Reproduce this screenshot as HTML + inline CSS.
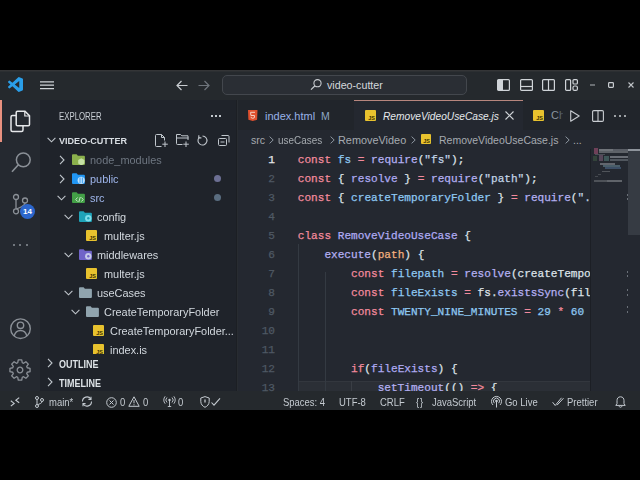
<!DOCTYPE html>
<html><head><meta charset="utf-8">
<style>
*{margin:0;padding:0;box-sizing:border-box}
html,body{width:640px;height:480px;background:#000;overflow:hidden}
body{position:relative;font-family:"Liberation Sans",sans-serif}
.a{position:absolute}
.t{position:absolute;white-space:nowrap;font-family:"Liberation Sans",sans-serif}
.m{position:absolute;white-space:pre;font-family:"Liberation Mono",monospace;font-size:11.1px;line-height:19px;-webkit-text-stroke:0.25px currentColor}
svg{position:absolute;overflow:visible}
#title{left:0;top:70px;width:640px;height:30px;background:#25292d}
#act{left:0;top:100px;width:40px;height:291px;background:#252930}
#side{left:40px;top:100px;width:196px;height:291px;background:#1f232a}
#sideb{left:236px;top:100px;width:1px;height:291px;background:#1c1f24}
#ed{left:238px;top:100px;width:402px;height:291px;background:#242830}
#status{left:0;top:391px;width:640px;height:19px;background:#25292d}
.tree{font-size:11.5px;line-height:19px;height:19px;color:#d2d8de;transform:scaleX(0.95);transform-origin:0 0}
.ln{color:#636e7b;text-align:right;width:30px;left:245px}
.k{color:#f28a9c}.b{color:#8ec8f2}.f{color:#b4b0f2}.w{color:#dde2e8}.s{color:#c2d4e6}.o{color:#f2b07e}.p{color:#aeaaf2}
.st{font-size:10.9px;line-height:18px;color:#c4cad0;top:393px;transform:scaleX(0.87);transform-origin:0 0}
.bc{font-size:10.5px;line-height:19px;color:#a6abb0;top:131px}
.ig{position:absolute;width:1px;background:#343a42}
.js{width:11px;height:11px;background:#e8c22e;border-radius:1px}
.js i{position:absolute;right:1px;bottom:0px;font-style:normal;font-weight:bold;font-family:"Liberation Sans",sans-serif;font-size:5.5px;line-height:6px;color:#3a3000}
</style></head><body>
<div class="a" id="title"></div>
<div class="a" style="left:0;top:70px;width:640px;height:1px;background:#343537"></div><div class="a" style="left:0;top:71px;width:640px;height:1px;background:#2c2f32"></div>
<div class="a" id="act"></div>
<div class="a" id="side"></div>
<div class="a" id="sideb"></div><div class="a" style="left:237px;top:100px;width:2px;height:291px;background:#282c31"></div>
<div class="a" id="ed"></div>
<div class="a" id="status"></div>

<!-- TITLE BAR -->
<svg style="left:8px;top:77px" width="15" height="15" viewBox="0 0 100 100"><path fill="#2a9ee8" d="M96.46 10.8 75.86.87a6.23 6.23 0 0 0-7.1 1.2L29.33 38.05 12.15 25a4.16 4.16 0 0 0-5.32.24L1.36 30.2a4.17 4.17 0 0 0 0 6.16L16.26 50 1.36 63.64a4.17 4.17 0 0 0 0 6.16l5.47 4.97a4.16 4.16 0 0 0 5.32.24l17.18-13.05L68.76 97.930a6.22 6.22 0 0 0 7.1 1.2l20.6-9.92a6.25 6.25 0 0 0 3.54-5.630V16.42a6.25 6.25 0 0 0-3.54-5.62zM75 72.7 45.11 50 75 27.3z"/></svg>
<svg style="left:40px;top:80px" width="14" height="10" viewBox="0 0 14 10"><path d="M0 1.8h14M0 5.2h14M0 8.7h14" stroke="#d0d4d8" stroke-width="1.2"/></svg>
<svg style="left:176px;top:80px" width="12" height="11" viewBox="0 0 12 11"><path d="M11.5 5.5H1M5.5 1 1 5.5 5.5 10" stroke="#c8ccd0" stroke-width="1.2" fill="none"/></svg>
<svg style="left:198px;top:80px" width="12" height="11" viewBox="0 0 12 11"><path d="M0.5 5.5H11M6.5 1 11 5.5 6.5 10" stroke="#6f757c" stroke-width="1.2" fill="none"/></svg>
<div class="a" style="left:222px;top:75px;width:245px;height:20px;border-radius:5px;background:#2a2e34;border:1px solid #43474d"></div>
<svg style="left:310px;top:79px" width="12" height="11" viewBox="0 0 12 11"><circle cx="7.5" cy="4.2" r="3.6" stroke="#c8ccd0" stroke-width="1.1" fill="none"/><path d="M5 6.8 1 10.6" stroke="#c8ccd0" stroke-width="1.2"/></svg>
<div class="t" style="left:327px;top:75px;font-size:10.7px;line-height:20px;color:#d4d8dc">video-cutter</div>
<!-- layout icons -->
<svg style="left:497px;top:79px" width="13" height="12" viewBox="0 0 13 12"><rect x="0.6" y="0.6" width="11.8" height="10.8" rx="1" stroke="#d0d4d8" stroke-width="1.2" fill="none"/><rect x="1" y="1" width="5" height="10" fill="#d0d4d8"/></svg>
<svg style="left:520px;top:79px" width="13" height="12" viewBox="0 0 13 12"><rect x="0.6" y="0.6" width="11.8" height="10.8" rx="1" stroke="#d0d4d8" stroke-width="1.2" fill="none"/><path d="M1 7.5h11" stroke="#d0d4d8" stroke-width="1.2"/></svg>
<svg style="left:542px;top:79px" width="13" height="12" viewBox="0 0 13 12"><rect x="0.6" y="0.6" width="11.8" height="10.8" rx="1" stroke="#d0d4d8" stroke-width="1.2" fill="none"/><path d="M6.5 1v10" stroke="#d0d4d8" stroke-width="1.2"/></svg>
<svg style="left:565px;top:79px" width="13" height="12" viewBox="0 0 13 12"><rect x="0.6" y="0.6" width="5" height="10.8" rx="1" stroke="#d0d4d8" stroke-width="1.2" fill="none"/><rect x="8" y="0.6" width="4.4" height="4.4" rx="1" stroke="#d0d4d8" stroke-width="1.2" fill="none"/><rect x="8" y="7" width="4.4" height="4.4" rx="1.5" stroke="#d0d4d8" stroke-width="1.2" fill="none"/></svg>
<svg style="left:590px;top:84px" width="6" height="2" viewBox="0 0 6 2"><path d="M0 1h5" stroke="#b0b4b8" stroke-width="1"/></svg>
<svg style="left:608px;top:82px" width="6" height="6" viewBox="0 0 6 6"><rect x="0.6" y="0.6" width="4.8" height="4.8" rx="0.8" stroke="#c8ccd0" stroke-width="1.2" fill="none"/></svg>
<svg style="left:628px;top:82px" width="6" height="6" viewBox="0 0 6 6"><path d="M0.5 0.5 5.5 5.5M5.5 0.5 0.5 5.5" stroke="#c0c4c8" stroke-width="1.1"/></svg>

<!-- ACTIVITY BAR -->
<div class="a" style="left:0;top:100px;width:2px;height:42px;background:#e8907f"></div>
<svg style="left:10px;top:110px" width="21" height="23" viewBox="0 0 21 23"><path d="M6 5.5H2.5a1.5 1.5 0 0 0-1.5 1.5v13a1.5 1.5 0 0 0 1.5 1.5h9a1.5 1.5 0 0 0 1.5-1.5V16" stroke="#e6e8ea" stroke-width="1.5" fill="none"/><path d="M7.5 1.2h7.5l4.5 4.5V14.5a1.3 1.3 0 0 1-1.3 1.3H7.5a1.3 1.3 0 0 1-1.3-1.3V2.5a1.3 1.3 0 0 1 1.3-1.3z" stroke="#e6e8ea" stroke-width="1.5" fill="none"/><path d="M14.8 1.5v4.5h4.5" stroke="#e6e8ea" stroke-width="1.2" fill="none"/></svg>
<svg style="left:11px;top:152px" width="21" height="21" viewBox="0 0 21 21"><circle cx="12.3" cy="7.8" r="6.9" stroke="#8b9097" stroke-width="1.5" fill="none"/><path d="M7.4 12.7 1 19.8" stroke="#8b9097" stroke-width="1.6"/></svg>
<svg style="left:11px;top:192px" width="18" height="22" viewBox="0 0 18 22"><circle cx="5" cy="5" r="2.5" stroke="#8b9097" stroke-width="1.3" fill="none"/><circle cx="14" cy="8.5" r="2.5" stroke="#8b9097" stroke-width="1.3" fill="none"/><circle cx="5" cy="19.3" r="2.5" stroke="#8b9097" stroke-width="1.3" fill="none"/><path d="M5 7.5v9.3M14 11c0 3-4 4-8.5 6" stroke="#8b9097" stroke-width="1.3" fill="none"/></svg>
<div class="a" style="left:20px;top:204px;width:15px;height:15px;border-radius:50%;background:#2c66cc"></div>
<div class="t" style="left:20px;top:204px;width:15px;text-align:center;font-size:8px;line-height:15px;font-weight:bold;color:#fff">14</div>
<div class="a" style="left:13px;top:244px;width:2px;height:2px;background:#8b9097;border-radius:1px"></div>
<div class="a" style="left:19px;top:244px;width:2px;height:2px;background:#8b9097;border-radius:1px"></div>
<div class="a" style="left:26px;top:244px;width:2px;height:2px;background:#8b9097;border-radius:1px"></div>
<svg style="left:10px;top:318px" width="22" height="22" viewBox="0 0 22 22"><circle cx="10.5" cy="10.7" r="9.8" stroke="#8b9097" stroke-width="1.4" fill="none"/><circle cx="10.5" cy="7.3" r="3.2" stroke="#8b9097" stroke-width="1.4" fill="none"/><path d="M4.2 18c0.8-3.5 3.3-5.5 6.3-5.5s5.5 2 6.3 5.5" stroke="#8b9097" stroke-width="1.4" fill="none"/></svg>
<svg style="left:9px;top:359px" width="22" height="22" viewBox="-11 -11 22 22"><path d="M7.26 -2.25 L10.05 -1.73 L10.05 1.73 L7.26 2.25 L6.72 3.55 L8.33 5.89 L5.89 8.33 L3.55 6.72 L2.25 7.26 L1.73 10.05 L-1.73 10.05 L-2.25 7.26 L-3.55 6.72 L-5.89 8.33 L-8.33 5.89 L-6.72 3.55 L-7.26 2.25 L-10.05 1.73 L-10.05 -1.73 L-7.26 -2.25 L-6.72 -3.55 L-8.33 -5.89 L-5.89 -8.33 L-3.55 -6.72 L-2.25 -7.26 L-1.73 -10.05 L1.73 -10.05 L2.25 -7.26 L3.55 -6.72 L5.89 -8.33 L8.33 -5.89 L6.72 -3.55Z" stroke="#8b9097" stroke-width="1.3" fill="none" stroke-linejoin="round"/><circle cx="0" cy="0" r="2.8" stroke="#8b9097" stroke-width="1.3" fill="none"/></svg>

<!-- SIDEBAR -->
<svg width="0" height="0" style="position:absolute"><defs>
<path id="fold" d="M0 1.3a1 1 0 0 1 1-1h3.6l1.3 1.4h6a1 1 0 0 1 1 1v7.3a1 1 0 0 1-1 1H1a1 1 0 0 1-1-1z"/>
<symbol id="f-node" viewBox="0 0 13 11"><use href="#fold" fill="#8bb04c"/><path d="M9.3 4.2l3.1 1.8v3.6l-3.1 1.8-3.1-1.8V6z" fill="#c5e1a5"/></symbol>
<symbol id="f-public" viewBox="0 0 13 11"><use href="#fold" fill="#2196f3"/><circle cx="9.2" cy="7.3" r="3.6" fill="#bbdefb"/><path d="M8 4.5v5.6M10.4 4.5v5.6" stroke="#2196f3" stroke-width="0.8"/></symbol>
<symbol id="f-src" viewBox="0 0 13 11"><use href="#fold" fill="#43a047"/><path d="M5.5 5.5 3.8 7.5l1.7 2M9.5 5.5l1.7 2-1.7 2M8.3 5 6.8 10" stroke="#c8e6c9" stroke-width="1" fill="none"/></symbol>
<symbol id="f-config" viewBox="0 0 13 11"><use href="#fold" fill="#1fa3b8"/><circle cx="9.3" cy="7.2" r="3.2" fill="#80deea"/><circle cx="9.3" cy="7.2" r="1.2" fill="#1fa3b8"/></symbol>
<symbol id="f-mw" viewBox="0 0 13 11"><use href="#fold" fill="#7064c8"/><circle cx="9.3" cy="7.2" r="3.2" fill="#c5cae9"/><circle cx="9.3" cy="7.2" r="1.2" fill="#7064c8"/></symbol>
<symbol id="f-gray" viewBox="0 0 13 11"><use href="#fold" fill="#90a4ae"/></symbol>
</defs></svg>
<svg style="left:47px;top:137px" width="9" height="6" viewBox="0 0 9 6"><path d="M0.6 0.8 4.5 4.8 8.4 0.8" stroke="#c0c6cc" stroke-width="1.1" fill="none"/></svg>
<div class="t" style="left:59px;top:131px;font-size:9.8px;line-height:19px;font-weight:bold;color:#d8dde2;transform:scaleX(0.925);transform-origin:0 0">VIDEO-CUTTER</div>
<svg style="left:155px;top:134px" width="14" height="13" viewBox="0 0 14 13"><path d="M6.5 12.5H1.5a1 1 0 0 1-1-1v-10a1 1 0 0 1 1-1h5l3 3v3" stroke="#c0c6cc" stroke-width="1" fill="none"/><path d="M6.5 0.5v3h3M10 7.5v5.5M7.3 10.2h5.5" stroke="#c0c6cc" stroke-width="1" fill="none"/></svg>
<svg style="left:176px;top:134px" width="14" height="13" viewBox="0 0 14 13"><path d="M6.5 10.5h-5a1 1 0 0 1-1-1v-9h4l1.3 1.3h6.2v4.2" stroke="#c0c6cc" stroke-width="1" fill="none"/><path d="M0.5 4h12M10 7.5v5.5M7.3 10.2h5.5" stroke="#c0c6cc" stroke-width="1" fill="none"/></svg>
<svg style="left:197px;top:135px" width="11" height="11" viewBox="0 0 11 11"><path d="M5.5 1A4.5 4.5 0 1 1 2.3 2.3" stroke="#c0c6cc" stroke-width="1.1" fill="none"/><path d="M1.8 0.3v2.6h2.6" stroke="#c0c6cc" stroke-width="1.1" fill="none"/></svg>
<svg style="left:218px;top:135px" width="12" height="11" viewBox="0 0 12 11"><rect x="0.5" y="3.5" width="8" height="7" rx="1" stroke="#c0c6cc" stroke-width="1" fill="none"/><path d="M3.5 0.5h6.5a1 1 0 0 1 1 1v6M2.5 7h4" stroke="#c0c6cc" stroke-width="1" fill="none"/></svg>
<div class="a" style="left:214px;top:175px;width:7px;height:7px;border-radius:50%;background:#6c6f93"></div>
<div class="a" style="left:214px;top:194px;width:7px;height:7px;border-radius:50%;background:#5a6d80"></div>
<div class="a" style="left:0;top:0;width:238px;height:354px;overflow:hidden">
<svg style="left:59px;top:155px" width="6" height="10" viewBox="0 0 6 10"><path d="M1 0.8 5 5 1 9.2" stroke="#c0c6cc" stroke-width="1.1" fill="none"/></svg>
<svg style="left:72px;top:154px" width="13" height="11" viewBox="0 0 13 11"><use href="#f-node"/></svg>
<div class="t tree" style="left:90px;top:151px;color:#6e7681">node_modules</div>
<svg style="left:59px;top:174px" width="6" height="10" viewBox="0 0 6 10"><path d="M1 0.8 5 5 1 9.2" stroke="#c0c6cc" stroke-width="1.1" fill="none"/></svg>
<svg style="left:72px;top:173px" width="13" height="11" viewBox="0 0 13 11"><use href="#f-public"/></svg>
<div class="t tree" style="left:90px;top:170px;color:#9fb6ec">public</div>
<svg style="left:57px;top:195px" width="9" height="6" viewBox="0 0 9 6"><path d="M0.6 0.8 4.5 4.8 8.4 0.8" stroke="#c0c6cc" stroke-width="1.1" fill="none"/></svg>
<svg style="left:72px;top:192px" width="13" height="11" viewBox="0 0 13 11"><use href="#f-src"/></svg>
<div class="t tree" style="left:90px;top:189px;color:#9fb6ec">src</div>
<svg style="left:64px;top:214px" width="9" height="6" viewBox="0 0 9 6"><path d="M0.6 0.8 4.5 4.8 8.4 0.8" stroke="#c0c6cc" stroke-width="1.1" fill="none"/></svg>
<svg style="left:79px;top:211px" width="13" height="11" viewBox="0 0 13 11"><use href="#f-config"/></svg>
<div class="t tree" style="left:97px;top:208px;color:#d2d8de">config</div>
<div class="a js" style="left:86px;top:230px"><i>JS</i></div>
<div class="t tree" style="left:104px;top:227px;color:#d2d8de">multer.js</div>
<svg style="left:64px;top:252px" width="9" height="6" viewBox="0 0 9 6"><path d="M0.6 0.8 4.5 4.8 8.4 0.8" stroke="#c0c6cc" stroke-width="1.1" fill="none"/></svg>
<svg style="left:79px;top:249px" width="13" height="11" viewBox="0 0 13 11"><use href="#f-mw"/></svg>
<div class="t tree" style="left:97px;top:246px;color:#d2d8de">middlewares</div>
<div class="a js" style="left:86px;top:268px"><i>JS</i></div>
<div class="t tree" style="left:104px;top:265px;color:#d2d8de">multer.js</div>
<svg style="left:64px;top:290px" width="9" height="6" viewBox="0 0 9 6"><path d="M0.6 0.8 4.5 4.8 8.4 0.8" stroke="#c0c6cc" stroke-width="1.1" fill="none"/></svg>
<svg style="left:79px;top:287px" width="13" height="11" viewBox="0 0 13 11"><use href="#f-gray"/></svg>
<div class="t tree" style="left:97px;top:284px;color:#d2d8de">useCases</div>
<svg style="left:71px;top:309px" width="9" height="6" viewBox="0 0 9 6"><path d="M0.6 0.8 4.5 4.8 8.4 0.8" stroke="#c0c6cc" stroke-width="1.1" fill="none"/></svg>
<svg style="left:86px;top:306px" width="13" height="11" viewBox="0 0 13 11"><use href="#f-gray"/></svg>
<div class="t tree" style="left:104px;top:303px;color:#d2d8de">CreateTemporaryFolder</div>
<div class="a js" style="left:93px;top:325px"><i>JS</i></div>
<div class="t tree" style="left:110px;top:322px;color:#d2d8de">CreateTemporaryFolder...</div>
<div class="a js" style="left:93px;top:344px"><i>JS</i></div>
<div class="t tree" style="left:110px;top:341px;color:#d2d8de">index.js</div>
</div>
<svg style="left:47px;top:358px" width="6" height="10" viewBox="0 0 6 10"><path d="M1 0.8 5 5 1 9.2" stroke="#c0c6cc" stroke-width="1.1" fill="none"/></svg>
<div class="t" style="left:59px;top:355px;font-size:10px;line-height:19px;font-weight:bold;color:#dde2e6;transform:scaleX(0.9);transform-origin:0 0">OUTLINE</div>
<svg style="left:47px;top:377px" width="6" height="10" viewBox="0 0 6 10"><path d="M1 0.8 5 5 1 9.2" stroke="#c0c6cc" stroke-width="1.1" fill="none"/></svg>
<div class="t" style="left:59px;top:374px;font-size:10px;line-height:19px;font-weight:bold;color:#dde2e6;transform:scaleX(0.9);transform-origin:0 0">TIMELINE</div>

<div class="t" style="left:59px;top:107px;font-size:10.3px;line-height:19px;color:#c8ced4;transform:scaleX(0.76);transform-origin:0 0">EXPLORER</div>
<div class="a" style="left:211px;top:115px;width:2px;height:2px;background:#c2c8ce"></div><div class="a" style="left:215px;top:115px;width:2px;height:2px;background:#c2c8ce"></div><div class="a" style="left:219px;top:115px;width:2px;height:2px;background:#c2c8ce"></div>

<!-- EDITOR -->
<div class="a" style="left:238px;top:100px;width:116px;height:30px;background:#21252b"></div>
<div class="a" style="left:523px;top:100px;width:117px;height:30px;background:#21252b"></div>
<div class="a" style="left:354px;top:100px;width:169px;height:1px;background:#b8867e"></div>
<svg style="left:248px;top:110px" width="10" height="11" viewBox="0 0 10 11"><path d="M0 0h9.5l-0.4 9.8L4.75 11 0.4 9.8z" fill="#e0502e"/><path d="M7 2.3H2.6l0.3 3.2h3.6l-0.2 2.3-1.55 0.5-1.5-0.5-0.1-1" stroke="#f6d0c4" stroke-width="1" fill="none"/></svg>
<div class="t" style="left:265px;top:107px;font-size:11px;line-height:19px;color:#98b2e6">index.html</div>
<div class="t" style="left:321px;top:107px;font-size:10.5px;line-height:19px;color:#8ea8c4">M</div>
<div class="a js" style="left:365px;top:110px"><i>JS</i></div>
<div class="t" style="left:383px;top:107px;font-size:10.2px;line-height:19px;font-style:italic;color:#e6e9ec">RemoveVideoUseCase.js</div>
<svg style="left:505px;top:111px" width="9" height="9" viewBox="0 0 9 9"><path d="M0.5 0.5 8.5 8.5M8.5 0.5 0.5 8.5" stroke="#d0d4d8" stroke-width="1.1"/></svg>
<div class="a" style="left:533px;top:110px;width:11px;height:11px;overflow:hidden"><div class="a js" style="left:0;top:0"><i>JS</i></div></div>
<div class="a" style="left:551px;top:100px;width:12px;height:30px;overflow:hidden"><div class="t" style="left:0;top:6px;font-size:11px;line-height:19px;color:#8d96a0">Ch</div></div>
<div class="a" style="left:556px;top:100px;width:10px;height:30px;background:linear-gradient(90deg,rgba(33,37,43,0),#21252b)"></div>
<svg style="left:570px;top:110px" width="10" height="12" viewBox="0 0 10 12"><path d="M0.7 0.8 9.2 6 0.7 11.2z" stroke="#c8ccd0" stroke-width="1.1" fill="none" stroke-linejoin="round"/></svg>
<svg style="left:592px;top:110px" width="12" height="12" viewBox="0 0 12 12"><rect x="0.6" y="0.6" width="10.8" height="10.8" rx="1.2" stroke="#c8ccd0" stroke-width="1.1" fill="none"/><path d="M6 1v10" stroke="#c8ccd0" stroke-width="1.1"/></svg>
<div class="a" style="left:614px;top:115px;width:2px;height:2px;border-radius:1px;background:#c8ccd0"></div>
<div class="a" style="left:619px;top:115px;width:2px;height:2px;border-radius:1px;background:#c8ccd0"></div>
<div class="a" style="left:624px;top:115px;width:2px;height:2px;border-radius:1px;background:#c8ccd0"></div>
<div class="t bc" style="left:251px">src</div>
<div class="t bc" style="left:278px;transform:scaleX(0.945);transform-origin:0 0">useCases</div>
<div class="t bc" style="left:338px;font-size:10.9px">RemoveVideo</div>
<div class="t bc" style="left:439px">RemoveVideoUseCase.js</div>
<svg style="left:269px;top:136px" width="5" height="8" viewBox="0 0 5 8"><path d="M0.6 0.6 4.2 4 0.6 7.4" stroke="#8d96a0" stroke-width="1" fill="none"/></svg>
<svg style="left:330px;top:136px" width="5" height="8" viewBox="0 0 5 8"><path d="M0.6 0.6 4.2 4 0.6 7.4" stroke="#8d96a0" stroke-width="1" fill="none"/></svg>
<svg style="left:411px;top:136px" width="5" height="8" viewBox="0 0 5 8"><path d="M0.6 0.6 4.2 4 0.6 7.4" stroke="#8d96a0" stroke-width="1" fill="none"/></svg>
<svg style="left:565px;top:136px" width="5" height="8" viewBox="0 0 5 8"><path d="M0.6 0.6 4.2 4 0.6 7.4" stroke="#8d96a0" stroke-width="1" fill="none"/></svg>
<div class="a js" style="left:421px;top:134px;width:10px;height:10px"><i>JS</i></div>
<div class="t bc" style="left:573px">...</div>
<div class="m ln" style="top:151px;color:#e6e9ec">1</div>
<div class="m ln" style="top:170px;color:#4f5964">2</div>
<div class="m ln" style="top:189px;color:#4f5964">3</div>
<div class="m ln" style="top:208px;color:#4f5964">4</div>
<div class="m ln" style="top:227px;color:#4f5964">5</div>
<div class="m ln" style="top:246px;color:#4f5964">6</div>
<div class="m ln" style="top:265px;color:#4f5964">7</div>
<div class="m ln" style="top:284px;color:#4f5964">8</div>
<div class="m ln" style="top:303px;color:#4f5964">9</div>
<div class="m ln" style="top:322px;color:#4f5964">10</div>
<div class="m ln" style="top:341px;color:#4f5964">11</div>
<div class="m ln" style="top:360px;color:#4f5964">12</div>
<div class="m ln" style="top:379px;color:#4f5964">13</div>
<div class="a" style="left:298px;top:381px;width:292px;height:10px;background:#2b2f36;border-top:1px solid #33373e"></div>
<div class="ig" style="left:298px;top:244px;height:147px"></div>
<div class="ig" style="left:325px;top:272px;height:119px"></div>
<div class="ig" style="left:351px;top:381px;height:10px;background:#3a3e45"></div>
<div class="a" style="left:238px;top:151px;width:352px;height:240px;overflow:hidden"><div class="m" style="left:59.75px;top:0px"><span class="k">const</span> <span class="b">fs</span> <span class="k">=</span> <span class="f">require</span><span class="w">(</span><span class="s">"fs"</span><span class="w">);</span></div><div class="m" style="left:59.75px;top:19px"><span class="k">const</span> <span class="w">{</span> <span class="p">resolve</span> <span class="w">}</span> <span class="k">=</span> <span class="f">require</span><span class="w">(</span><span class="s">"path"</span><span class="w">);</span></div><div class="m" style="left:59.75px;top:38px"><span class="k">const</span> <span class="w">{</span> <span class="b">createTemporaryFolder</span> <span class="w">}</span> <span class="k">=</span> <span class="f">require</span><span class="w">(</span><span class="s">"./utils/CreateTemporaryFolder"</span><span class="w">);</span></div><div class="m" style="left:59.75px;top:57px"></div><div class="m" style="left:59.75px;top:76px"><span class="k">class</span> <span class="p">RemoveVideoUseCase</span> <span class="w">{</span></div><div class="m" style="left:59.75px;top:95px">    <span class="f">execute</span><span class="w">(</span><span class="o">path</span><span class="w">) {</span></div><div class="m" style="left:59.75px;top:114px">        <span class="k">const</span> <span class="b">filepath</span> <span class="k">=</span> <span class="f">resolve</span><span class="w">(createTemporaryFolder(), path);</span></div><div class="m" style="left:59.75px;top:133px">        <span class="k">const</span> <span class="b">fileExists</span> <span class="k">=</span> <span class="w">fs.</span><span class="f">existsSync</span><span class="w">(filepath);</span></div><div class="m" style="left:59.75px;top:152px">        <span class="k">const</span> <span class="b">TWENTY_NINE_MINUTES</span> <span class="k">=</span> <span class="b">29</span> <span class="k">*</span> <span class="b">60</span></div><div class="m" style="left:59.75px;top:171px"></div><div class="m" style="left:59.75px;top:190px"></div><div class="m" style="left:59.75px;top:209px">        <span class="k">if</span><span class="w">(</span><span class="p">fileExists</span><span class="w">) {</span></div><div class="m" style="left:59.75px;top:228px">            <span class="f">setTimeout</span><span class="w">(() </span><span class="k">=&gt;</span> <span class="w">{</span></div></div>
<div class="a" style="left:590px;top:149px;width:1px;height:242px;background:#1c1f25"></div>
<div class="a" style="left:628px;top:149px;width:12px;height:86px;background:#363b43"></div>
<div class="a" style="left:627px;top:194px;width:1px;height:2px;background:#6a7078"></div>
<div class="a" style="left:627px;top:198px;width:1px;height:2px;background:#6a7078"></div>
<div class="a" style="left:627px;top:271px;width:1px;height:2px;background:#6a7078"></div>
<div class="a" style="left:627px;top:275px;width:1px;height:2px;background:#6a7078"></div>
<div class="a" style="left:627px;top:289px;width:1px;height:2px;background:#6a7078"></div>
<div class="a" style="left:627px;top:294px;width:1px;height:2px;background:#6a7078"></div>
<div class="a" style="left:627px;top:306px;width:1px;height:2px;background:#6a7078"></div>
<div class="a" style="left:627px;top:311px;width:1px;height:2px;background:#6a7078"></div>
<div class="a" style="left:628px;top:149px;width:12px;height:2px;background:#8e949c"></div>
<div class="a" style="left:0;top:0;width:640px;height:480px;filter:blur(0.35px)"><div class="a" style="left:594px;top:148px;width:4px;height:6px;background:#6e4058"></div><div class="a" style="left:599px;top:149px;width:16px;height:2px;background:#70747a"></div><div class="a" style="left:599px;top:151px;width:29px;height:2px;background:#5e6268"></div><div class="a" style="left:613px;top:149px;width:15px;height:2px;background:#5a5e66"></div><div class="a" style="left:595px;top:154px;width:10px;height:1px;background:#4a4e56"></div><div class="a" style="left:593px;top:156px;width:4px;height:5px;background:#33433a"></div><div class="a" style="left:599px;top:155px;width:4px;height:6px;background:#56475a"></div><div class="a" style="left:604px;top:156px;width:5px;height:5px;background:#3e5658"></div><div class="a" style="left:610px;top:156px;width:18px;height:2px;background:#6a6e76"></div><div class="a" style="left:610px;top:159px;width:18px;height:2px;background:#50565e"></div><div class="a" style="left:600px;top:163px;width:15px;height:2px;background:#62666e"></div><div class="a" style="left:603px;top:165px;width:17px;height:2px;background:#4a5e6a"></div><div class="a" style="left:605px;top:167px;width:16px;height:2px;background:#3c4e66"></div><div class="a" style="left:602px;top:171px;width:8px;height:1px;background:#50545a"></div><div class="a" style="left:598px;top:174px;width:3px;height:1px;background:#45494f"></div><div class="a" style="left:595px;top:176px;width:3px;height:1px;background:#45494f"></div><div class="a" style="left:594px;top:180px;width:13px;height:2px;background:#4e5258"></div><div class="a" style="left:607px;top:180px;width:15px;height:2px;background:#60646a"></div></div>

<!-- STATUS BAR -->
<svg style="left:10px;top:397px" width="10" height="10" viewBox="0 0 10 10"><path d="M0.8 3.8 4.2 6.4 0.8 9.2M9.2 0.6 5.8 3.2 9.2 5.8" stroke="#c4cad0" stroke-width="1.1" fill="none"/></svg>
<svg style="left:35px;top:396px" width="9" height="12" viewBox="0 0 9 12"><circle cx="2" cy="2" r="1.5" stroke="#c4cad0" stroke-width="1" fill="none"/><circle cx="7" cy="4" r="1.5" stroke="#c4cad0" stroke-width="1" fill="none"/><circle cx="2" cy="10" r="1.5" stroke="#c4cad0" stroke-width="1" fill="none"/><path d="M2 3.5v5M7 5.5c0 2-3 2.5-4.5 3.3" stroke="#c4cad0" stroke-width="1" fill="none"/></svg>
<div class="t st" style="left:49px">main*</div>
<svg style="left:81px;top:396px" width="12" height="11" viewBox="0 0 12 11"><path d="M1.5 5.5A4.5 4.5 0 0 1 9.8 3M10.5 5.5A4.5 4.5 0 0 1 2.2 8" stroke="#c4cad0" stroke-width="1.1" fill="none"/><path d="M10 0.8v2.6H7.4M2 10.2V7.6h2.6" stroke="#c4cad0" stroke-width="1.1" fill="none"/></svg>
<svg style="left:106px;top:397px" width="11" height="11" viewBox="0 0 11 11"><circle cx="5.5" cy="5.5" r="4.8" stroke="#c4cad0" stroke-width="1" fill="none"/><path d="M3.5 3.5l4 4M7.5 3.5l-4 4" stroke="#c4cad0" stroke-width="1"/></svg>
<div class="t st" style="left:120px">0</div>
<svg style="left:128px;top:396px" width="12" height="11" viewBox="0 0 12 11"><path d="M6 0.8 11.2 10.3H0.8z" stroke="#c4cad0" stroke-width="1" fill="none" stroke-linejoin="round"/><path d="M6 4v3.3M6 8.3v1" stroke="#c4cad0" stroke-width="1"/></svg>
<div class="t st" style="left:143px">0</div>
<svg style="left:164px;top:396px" width="11" height="11" viewBox="0 0 11 11"><circle cx="5.5" cy="4" r="1.2" fill="#c4cad0"/><path d="M5.5 5v5.5M3 1.5A3.5 3.5 0 0 0 3 6.5M8 1.5A3.5 3.5 0 0 1 8 6.5M1.2 0.3A5.5 5.5 0 0 0 1.2 7.7M9.8 0.3A5.5 5.5 0 0 1 9.8 7.7M3.8 10.5h3.4" stroke="#c4cad0" stroke-width="0.9" fill="none"/></svg>
<div class="t st" style="left:178px">0</div>
<svg style="left:200px;top:396px" width="21" height="12" viewBox="0 0 21 12"><path d="M5 0.6 9.2 2v3.5c0 2.8-2 4.8-4.2 5.8C2.8 10.3 0.8 8.3 0.8 5.5V2z" stroke="#c4cad0" stroke-width="1" fill="none"/><path d="M5 3.5v3" stroke="#c4cad0" stroke-width="1.3"/><path d="M11.5 6.5 14 9.2 20 2.3" stroke="#c4cad0" stroke-width="1.1" fill="none"/></svg>
<div class="t st" style="left:283px">Spaces: 4</div>
<div class="t st" style="left:339px">UTF-8</div>
<div class="t st" style="left:380px">CRLF</div>
<div class="t st" style="left:432px">JavaScript</div>
<div class="t st" style="left:505px">Go Live</div>
<div class="t st" style="left:567px">Prettier</div>
<div class="t st" style="left:416px;letter-spacing:1px">{}</div>
<svg style="left:491px;top:396px" width="11" height="12" viewBox="0 0 11 12"><circle cx="5.5" cy="5" r="1.3" fill="#c4cad0"/><path d="M5.5 6v5.5M3.3 7.2A3 3 0 1 1 7.7 7.2M2 9A5 5 0 1 1 9 9" stroke="#c4cad0" stroke-width="1" fill="none"/></svg>
<svg style="left:552px;top:397px" width="12" height="10" viewBox="0 0 12 10"><path d="M0.6 5.2 3.2 8.5 9.5 0.8M5 8.2l6.5-7" stroke="#c4cad0" stroke-width="1" fill="none"/></svg>
<svg style="left:615px;top:396px" width="11" height="12" viewBox="0 0 11 12"><path d="M5.5 0.8C3 0.8 2 2.6 2 4.6v3L0.8 9.4h9.4L9 7.6v-3C9 2.6 8 0.8 5.5 0.8zM4 10.2a1.6 1.6 0 0 0 3 0" stroke="#c4cad0" stroke-width="1" fill="none"/></svg>
</body></html>
